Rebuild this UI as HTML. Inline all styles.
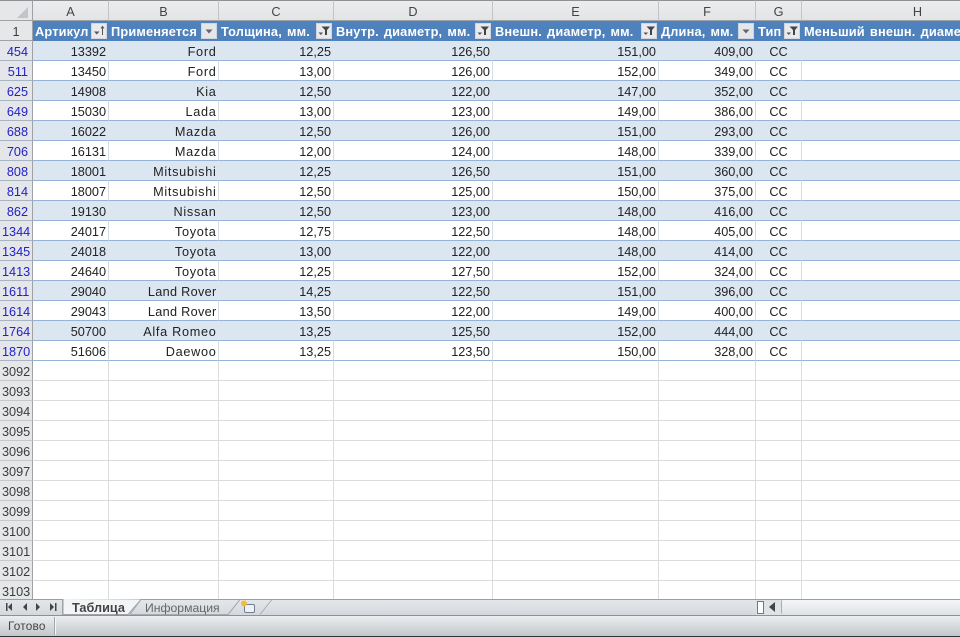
<!DOCTYPE html>
<html><head><meta charset="utf-8"><style>
html,body{margin:0;padding:0;width:960px;height:637px;overflow:hidden;background:#fff}
body{font-family:"Liberation Sans",sans-serif;font-size:12.7px;color:#222;position:relative}
#g{position:absolute;left:0;top:0;width:960px;height:599px;overflow:hidden}
table{border-collapse:separate;border-spacing:0;table-layout:fixed;width:1034px}
td,th{box-sizing:border-box;height:20px;padding:2px 2px 0 2px;border-right:1px solid #dcdcdc;border-bottom:1px solid #dcdcdc;white-space:nowrap;overflow:hidden;text-align:right;font-weight:normal;position:relative}
.ch th{height:21px;background:linear-gradient(#eceded,#e2e4e6);border-right:1px solid #c2c4c7;border-bottom:1px solid #9fa3a8;border-top:1px solid #8e9296;text-align:center;color:#444;padding-top:3px}
.rh{background:#e6e7e8;border-right:1px solid #9ea2a6;border-bottom:1px solid #c6c8ca;color:#3c3c3c;text-align:right;padding-right:4px}
.f .rh{color:#2222c4;background:#e4e6e9;border-bottom:1px solid #a9b4c2}
.hd td{background:#4f81bd;color:#fff;font-weight:bold;text-align:left;border-right:1px solid #4f81bd;border-bottom:1px solid #4f81bd;font-size:12.8px;letter-spacing:.15px;word-spacing:1.4px}
.hd .rh{background:#e6e7e8;color:#3c3c3c;font-weight:normal;text-align:center;border-right:1px solid #9ea2a6;border-bottom:1px solid #9ea2a6;font-size:12.7px;letter-spacing:0;word-spacing:0;padding:2px 0 0}
.f td{border-bottom:1px solid #95b3d7}
.f td:not(.rh){border-right:1px solid #d5dbe2}
.b td:not(.rh){background:#dce6f1;border-right-color:#dce6f1}
.c{text-align:center;padding-left:0;padding-right:0}
.n{letter-spacing:.7px;padding-right:1.5px}
svg.b1{position:absolute;top:2px;right:1px;width:16px;height:16px}
#corner{position:absolute;left:17px;top:7px;width:0;height:0;border-style:solid;border-width:0 0 11px 11px;border-color:transparent transparent #c2c5c8 transparent}
#tabs{position:absolute;left:0;top:599px;width:960px;height:17px;background:linear-gradient(#e4e7ea,#d4d8dc);border-top:1px solid #9a9ea3;box-sizing:border-box;border-bottom:1px solid #8d9197}
#status{position:absolute;left:0;top:616px;width:960px;height:20px;background:linear-gradient(#eceef0,#c3c7cb)}
#blk{position:absolute;left:0;top:636px;width:960px;height:1px;background:#30343a}
#st{position:absolute;left:8px;top:3px;font-size:11.800px;color:#444;letter-spacing:.2px}
#sep{position:absolute;left:54px;top:1px;width:1px;height:18px;background:#a4a8ac;border-right:1px solid #f5f5f5}
.t{position:absolute;top:601px;font-size:12.7px;color:#555}
</style></head><body>
<svg width="0" height="0" style="position:absolute"><defs>
<symbol id="drop" viewBox="0 0 16 16"><rect x=".5" y=".5" width="15" height="15" fill="#e4e7ea" stroke="#d0d6dd"/><path d="M4.500 6.500h7L8 10.500z" fill="#666"/></symbol>
<symbol id="filt" viewBox="0 0 16 16"><rect x=".5" y=".5" width="15" height="15" fill="#e8eaed" stroke="#d0d6dd"/><path d="M5.500 3.500h8.500L11 7v5H9V7z" fill="#444"/><path d="M2.500 9.500h4.500l-2.200 2.500z" fill="#555"/></symbol>
<symbol id="sort" viewBox="0 0 16 16"><rect x=".5" y=".5" width="15" height="15" fill="#e8eaed" stroke="#d0d6dd"/><path d="M3 8.500h5.500l-2.700 3z" fill="#555"/><path d="M11.500 3.500v8.500M10 5.500l1.500-2 1.500 2" fill="none" stroke="#555"/></symbol>
</defs></svg>
<div id="g"><table>
<colgroup><col style="width:33px"><col style="width:76px"><col style="width:110px"><col style="width:115px"><col style="width:159px"><col style="width:166px"><col style="width:97px"><col style="width:46px"><col style="width:232px"></colgroup>
<tr class="ch"><th style="background:#e6e7e8;border-right:1px solid #9ea2a6"></th><th>A</th><th>B</th><th>C</th><th>D</th><th>E</th><th>F</th><th>G</th><th>H</th></tr>
<tr class="hd"><td class="rh">1</td>
<td>Артикул<svg class="b1"><use href="#sort"/></svg></td>
<td>Применяется<svg class="b1"><use href="#drop"/></svg></td>
<td>Толщина, мм.<svg class="b1"><use href="#filt"/></svg></td>
<td>Внутр. диаметр, мм.<svg class="b1"><use href="#filt"/></svg></td>
<td>Внешн. диаметр, мм.<svg class="b1"><use href="#filt"/></svg></td>
<td>Длина, мм.<svg class="b1"><use href="#drop"/></svg></td>
<td>Тип<svg class="b1"><use href="#filt"/></svg></td>
<td>Меньший внешн. диаметр, мм.</td></tr>
<tr class="f b"><td class="rh">454</td><td>13392</td><td class="n">Ford</td><td>12,25</td><td>126,50</td><td>151,00</td><td>409,00</td><td class="c">CC</td><td></td></tr>
<tr class="f"><td class="rh">511</td><td>13450</td><td class="n">Ford</td><td>13,00</td><td>126,00</td><td>152,00</td><td>349,00</td><td class="c">CC</td><td></td></tr>
<tr class="f b"><td class="rh">625</td><td>14908</td><td class="n">Kia</td><td>12,50</td><td>122,00</td><td>147,00</td><td>352,00</td><td class="c">CC</td><td></td></tr>
<tr class="f"><td class="rh">649</td><td>15030</td><td class="n">Lada</td><td>13,00</td><td>123,00</td><td>149,00</td><td>386,00</td><td class="c">CC</td><td></td></tr>
<tr class="f b"><td class="rh">688</td><td>16022</td><td class="n">Mazda</td><td>12,50</td><td>126,00</td><td>151,00</td><td>293,00</td><td class="c">CC</td><td></td></tr>
<tr class="f"><td class="rh">706</td><td>16131</td><td class="n">Mazda</td><td>12,00</td><td>124,00</td><td>148,00</td><td>339,00</td><td class="c">CC</td><td></td></tr>
<tr class="f b"><td class="rh">808</td><td>18001</td><td class="n">Mitsubishi</td><td>12,25</td><td>126,50</td><td>151,00</td><td>360,00</td><td class="c">CC</td><td></td></tr>
<tr class="f"><td class="rh">814</td><td>18007</td><td class="n">Mitsubishi</td><td>12,50</td><td>125,00</td><td>150,00</td><td>375,00</td><td class="c">CC</td><td></td></tr>
<tr class="f b"><td class="rh">862</td><td>19130</td><td class="n">Nissan</td><td>12,50</td><td>123,00</td><td>148,00</td><td>416,00</td><td class="c">CC</td><td></td></tr>
<tr class="f"><td class="rh">1344</td><td>24017</td><td class="n">Toyota</td><td>12,75</td><td>122,50</td><td>148,00</td><td>405,00</td><td class="c">CC</td><td></td></tr>
<tr class="f b"><td class="rh">1345</td><td>24018</td><td class="n">Toyota</td><td>13,00</td><td>122,00</td><td>148,00</td><td>414,00</td><td class="c">CC</td><td></td></tr>
<tr class="f"><td class="rh">1413</td><td>24640</td><td class="n">Toyota</td><td>12,25</td><td>127,50</td><td>152,00</td><td>324,00</td><td class="c">CC</td><td></td></tr>
<tr class="f b"><td class="rh">1611</td><td>29040</td><td class="n" style="letter-spacing:.3px">Land Rover</td><td>14,25</td><td>122,50</td><td>151,00</td><td>396,00</td><td class="c">CC</td><td></td></tr>
<tr class="f"><td class="rh">1614</td><td>29043</td><td class="n" style="letter-spacing:.3px">Land Rover</td><td>13,50</td><td>122,00</td><td>149,00</td><td>400,00</td><td class="c">CC</td><td></td></tr>
<tr class="f b"><td class="rh">1764</td><td>50700</td><td class="n">Alfa Romeo</td><td>13,25</td><td>125,50</td><td>152,00</td><td>444,00</td><td class="c">CC</td><td></td></tr>
<tr class="f"><td class="rh">1870</td><td>51606</td><td class="n">Daewoo</td><td>13,25</td><td>123,50</td><td>150,00</td><td>328,00</td><td class="c">CC</td><td></td></tr>
<tr><td class="rh">3092</td><td></td><td></td><td></td><td></td><td></td><td></td><td></td><td></td></tr>
<tr><td class="rh">3093</td><td></td><td></td><td></td><td></td><td></td><td></td><td></td><td></td></tr>
<tr><td class="rh">3094</td><td></td><td></td><td></td><td></td><td></td><td></td><td></td><td></td></tr>
<tr><td class="rh">3095</td><td></td><td></td><td></td><td></td><td></td><td></td><td></td><td></td></tr>
<tr><td class="rh">3096</td><td></td><td></td><td></td><td></td><td></td><td></td><td></td><td></td></tr>
<tr><td class="rh">3097</td><td></td><td></td><td></td><td></td><td></td><td></td><td></td><td></td></tr>
<tr><td class="rh">3098</td><td></td><td></td><td></td><td></td><td></td><td></td><td></td><td></td></tr>
<tr><td class="rh">3099</td><td></td><td></td><td></td><td></td><td></td><td></td><td></td><td></td></tr>
<tr><td class="rh">3100</td><td></td><td></td><td></td><td></td><td></td><td></td><td></td><td></td></tr>
<tr><td class="rh">3101</td><td></td><td></td><td></td><td></td><td></td><td></td><td></td><td></td></tr>
<tr><td class="rh">3102</td><td></td><td></td><td></td><td></td><td></td><td></td><td></td><td></td></tr>
<tr><td class="rh">3103</td><td></td><td></td><td></td><td></td><td></td><td></td><td></td><td></td></tr>
</table><div id="corner"></div></div>
<div id="tabs"></div>
<svg style="position:absolute;left:0;top:599px" width="300" height="17">
<path d="M0 .5H62M62.500 .5V16" stroke="#9a9ea3" fill="none"/>
<path d="M63 0V15.500H128L141 .5" fill="#f2f4f6" stroke="#a0a4a8"/>
<path d="M141 .5L130 15.500H228L240 .5" fill="none" stroke="#a8acb0"/>
<path d="M240 .5L228 15.500M272 .5L260 15.500" stroke="#a8acb0" fill="none"/>
<rect x="6" y="4" width="1.500" height="8" fill="#444"/><path d="M12 4v8L8 8z" fill="#444"/>
<path d="M27 4v8l-4-4z" fill="#444"/><path d="M36 4v8l4-4z" fill="#444"/>
<rect x="55" y="4" width="1.500" height="8" fill="#444"/><path d="M50 4v8l4-4z" fill="#444"/>
<rect x="244.500" y="5.500" width="10" height="8" rx="1.500" fill="#eef2f6" stroke="#6f7f90"/>
<circle cx="244" cy="4.500" r="3" fill="#f5bb3a"/>
</svg>
<div class="t" style="left:72px;font-weight:bold;color:#444">Таблица</div>
<div class="t" style="left:145px;color:#666;font-size:12.2px">Информация</div>
<div style="position:absolute;left:756px;top:600px;width:204px;height:15px;background:#e0e3e6"></div>
<div style="position:absolute;left:757px;top:601px;width:5px;height:11px;background:#fff;border:1px solid #777"></div>
<div style="position:absolute;left:769px;top:602px;width:0;height:0;border-style:solid;border-width:5px 6px 5px 0;border-color:transparent #444 transparent transparent"></div>
<div style="position:absolute;left:781px;top:600px;width:179px;height:14px;background:linear-gradient(#f4f5f7,#e0e3e7);border-left:1px solid #a9adb2;border-radius:2px 0 0 2px"></div>
<div id="status"><div id="st">Готово</div><div id="sep"></div></div>
<div id="blk"></div>
</body></html>
